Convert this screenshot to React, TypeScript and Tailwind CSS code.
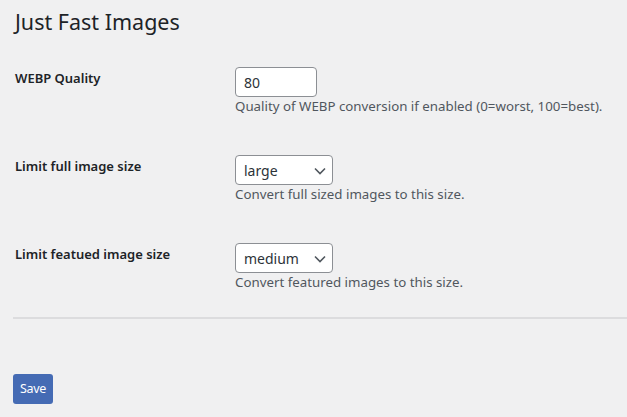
import React, { useState } from "react";

const Chevron = (): React.JSX.Element => (
  <svg
    width="12"
    height="8"
    viewBox="0 0 12 8"
    className="pointer-events-none absolute right-[7px] top-[12px]"
  >
    <path d="M1 1.5 L6 6.5 L11 1.5" fill="none" stroke="#50575e" strokeWidth="1.6" />
  </svg>
);

const SelectBox = ({
  value,
  options,
  onChange,
}: {
  value: string;
  options: string[];
  onChange: (v: string) => void;
}): React.JSX.Element => (
  <div className="relative w-[98px]">
    <select
      value={value}
      onChange={(e) => onChange(e.target.value)}
      className="h-[30px] w-full appearance-none rounded-[4px] border border-[#8c8f94] bg-white pl-[8px] pr-6 text-[14px] text-[#2c3338] outline-none"
    >
      {options.map((o) => (
        <option key={o} value={o}>
          {o}
        </option>
      ))}
    </select>
    <Chevron />
  </div>
);

const App = (): React.JSX.Element => {
  const [quality, setQuality] = useState<string>("80");
  const [fullSize, setFullSize] = useState<string>("large");
  const [featSize, setFeatSize] = useState<string>("medium");
  const sizes = ["thumbnail", "medium", "medium_large", "large", "full"];

  return (
    <div className="min-h-[417px] bg-[#f0f0f1] pl-[15px] font-['Noto_Sans',sans-serif] text-[#3c434a]">
      <h1 className="pt-[7px] text-[21.5px] leading-[30px] font-normal text-[#1d2327]">
        Just Fast Images
      </h1>

      <div className="mt-[15px] flex flex-col">
        {/* WEBP quality */}
        <div className="flex">
          <div className="w-[210px] pt-[17px] pr-[10px] text-[13px] leading-[18px] font-semibold text-[#1d2327]">
            WEBP Quality
          </div>
          <div className="py-[15px] pl-[10px]">
            <input
              type="text"
              value={quality}
              onChange={(e) => setQuality(e.target.value)}
              className="h-[30px] w-[82px] rounded-[4px] border border-[#8c8f94] bg-white px-[8px] text-[14px] text-[#2c3338] outline-none"
            />
            <p className="mb-[10px] text-[13.3px] leading-[18px] text-[#50575e]">
              Quality of WEBP conversion if enabled (0=worst, 100=best).
            </p>
          </div>
        </div>

        {/* full image size */}
        <div className="flex">
          <div className="w-[210px] pt-[17px] pr-[10px] text-[13px] leading-[18px] font-semibold text-[#1d2327]">
            Limit full image size
          </div>
          <div className="py-[15px] pl-[10px]">
            <SelectBox value={fullSize} options={sizes} onChange={setFullSize} />
            <p className="mb-[10px] text-[13.3px] leading-[18px] text-[#50575e]">
              Convert full sized images to this size.
            </p>
          </div>
        </div>

        {/* featured image size */}
        <div className="flex">
          <div className="w-[210px] pt-[17px] pr-[10px] text-[13px] leading-[18px] font-semibold text-[#1d2327]">
            Limit featued image size
          </div>
          <div className="py-[15px] pl-[10px]">
            <SelectBox value={featSize} options={sizes} onChange={setFeatSize} />
            <p className="mb-[10px] text-[13.3px] leading-[18px] text-[#50575e]">
              Convert featured images to this size.
            </p>
          </div>
        </div>
      </div>

      <hr className="-ml-[2px] mt-[1px] border-t-2 border-[#dcdcde]" />

      <div className="pt-[55px] -ml-[2px]">
        <button className="h-[30px] w-[40px] rounded-[3px] bg-[#456bb4] text-[12.5px] tracking-tight text-white">
          Save
        </button>
      </div>
    </div>
  );
};

export default App;
